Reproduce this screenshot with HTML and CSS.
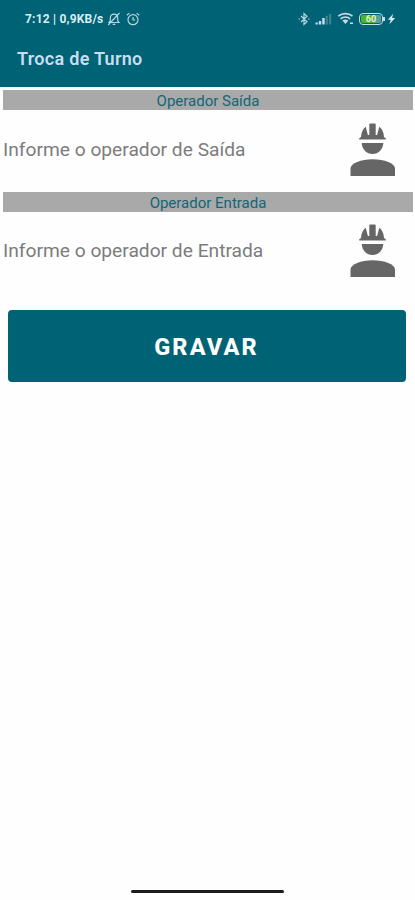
FILE: index.html
```html
<!DOCTYPE html>
<html lang="pt-BR">
<head>
  <meta charset="UTF-8" />
  <meta name="viewport" content="width=device-width, initial-scale=1">
  <title>Troca de Turno</title>
  <link rel="stylesheet" href="styles.css">
</head>
<body>
  <svg class="defs" width="0" height="0">
    <symbol id="operator" viewBox="0 0 46 54">
      <path d="M9.200 16.600v-1.400l1.800-1.200C11.200 9.500 12.900 5.800 15.700 3.700L17.900 12h1.400V1.500Q19.300.5 20.300.5h4.400q1 0 1 1V12h1.400l2.200-8.300c2.800 2.100 4.500 5.800 4.700 10.300l1.800 1.200v1.400z"/>
      <path d="M11.700 20h21.600C33 26.500 28.300 31 22.500 31S12 26.500 11.700 20z"/>
      <path d="M.5 53v-7.500C.5 40.500 11 36.300 22.700 36.300S45 40.500 45 45.500V53z"/>
    </symbol>
  </svg>

  <header>
    <div class="status-bar">
      <div class="status-left">
        <span class="clock">7:12 | 0,9KB/s</span>
        <svg class="bell" width="14" height="14" viewBox="0 0 14 14">
          <path d="M2 10.500h10L10.700 8.800V5.900C10.700 3.600 9.200 2.100 7 2.100S3.300 3.600 3.300 5.900v2.900zM5.700 12.300h2.600M12.500 1 1.200 13"/>
        </svg>
        <svg class="alarm" width="14" height="14" viewBox="0 0 14 14">
          <circle cx="7" cy="7.700" r="5"/>
          <path d="M7 5v3h2.200M.8 3.300 3.400 1.100M13.200 3.300 10.600 1.100"/>
        </svg>
      </div>
      <div class="status-right">
        <svg class="bluetooth" width="12" height="14" viewBox="0 0 12 14">
          <path d="M3 4l6 5.800L6 12.500v-11L9 4.200 3 10M.5 7H2M10 7h1.500"/>
        </svg>
        <svg class="signal" width="17" height="12" viewBox="0 0 17 12">
          <path d="M.5 9.500h2.300v2H.5zM3.800 8h2.400v3.500H3.800zM7.200 5h2.500v6.500H7.200z"/>
          <path class="dim" d="M10.700 2.800h2.200v8.700h-2.200zM14 1h2.200v10.500H14z"/>
        </svg>
        <svg class="wifi" width="18" height="13" viewBox="0 0 18 13">
          <path class="waves" d="M1.300 4.200c4-3.500 10.200-3.500 14.200 0M3.600 6.800c2.800-2.400 6.900-2.400 9.600 0"/>
          <path d="M5.400 8.500c1.800-1.500 4.200-1.500 6 0l-3 3.400zM13 10.500h3v1.600h-3z"/>
        </svg>
        <div class="battery"><span>60</span></div>
        <svg class="bolt" width="9" height="12" viewBox="0 0 9 12">
          <path d="M6.200.8.8 6.700h2.900L2.400 11.200 8.200 5H5.100z"/>
        </svg>
      </div>
    </div>
    <h1>Troca de Turno</h1>
  </header>

  <main>
    <section>
      <h2>Operador Saída</h2>
      <div class="field">
        <span>Informe o operador de Saída</span>
        <svg class="operator" width="46" height="54"><use href="#operator"/></svg>
      </div>
    </section>
    <section>
      <h2>Operador Entrada</h2>
      <div class="field">
        <span>Informe o operador de Entrada</span>
        <svg class="operator" width="46" height="54"><use href="#operator"/></svg>
      </div>
    </section>
    <button class="save">GRAVAR</button>
  </main>

  <footer>
    <div class="home-bar"></div>
  </footer>
</body>
</html>
```

FILE: styles.css
```css
* {
  box-sizing: border-box;
}
body {
  display: flex;
  flex-direction: column;
  height: 100vh;
  margin: 0;
  background: #fefefe;
  font-family: Roboto, sans-serif;
  overflow: hidden;
}
.defs {
  display: block;
}
header {
  height: 87px;
  background: #006275;
  color: #c9def0;
}
.status-bar {
  display: flex;
  justify-content: space-between;
  height: 37px;
  padding: 0 19px 0 25px;
}
.status-left,
.status-right {
  display: flex;
  align-items: center;
}
.clock {
  width: 79px;
  color: #d9edf3;
  font-size: 12px;
  font-weight: 700;
  letter-spacing: 0.2px;
  white-space: nowrap;
}
.bell,
.alarm,
.bluetooth {
  fill: none;
  stroke: #b9d6df;
  stroke-width: 1.2;
}
.bell {
  margin-left: 3px;
}
.alarm {
  margin-left: 5px;
}
.signal {
  margin-left: 5px;
  fill: #c5dde5;
}
.signal .dim {
  fill: #3b8291;
}
.wifi {
  margin-left: 5px;
  fill: #c5dde5;
}
.wifi .waves {
  fill: none;
  stroke: #c5dde5;
  stroke-width: 1.6;
}
.battery {
  position: relative;
  width: 24px;
  height: 12px;
  margin: 0 2px 0 4px;
  padding: 1px;
  border: 1px solid #c5dde5;
  border-radius: 4px;
  background: linear-gradient(90deg, #49b52c 65%, #5f9c94 65%) content-box;
  color: #e4f3cf;
  font-size: 9px;
  font-weight: 700;
  line-height: 8px;
  text-align: center;
}
.battery::after {
  content: "";
  position: absolute;
  top: 3px;
  right: -3px;
  width: 2px;
  height: 4px;
  background: #c5dde5;
}
.bolt {
  margin-left: 2px;
  fill: #d3e8ee;
}
h1 {
  margin: 0;
  padding: 10px 0 0 17px;
  font-size: 18px;
  font-weight: 600;
  letter-spacing: 0.3px;
  line-height: 24px;
}
main {
  flex: 1;
  padding: 3px 2px 0 3px;
}
section {
  height: 102px;
}
h2 {
  height: 20px;
  margin: 0;
  padding-top: 1px;
  background: #a9a9a9;
  color: #126676;
  font-size: 15px;
  font-weight: 400;
  line-height: 20px;
  text-align: center;
}
.field {
  display: flex;
  justify-content: space-between;
  padding: 13px 17px 0 0;
  color: #7c7c7c;
  font-size: 19.2px;
}
section + section .field {
  padding-top: 12px;
}
.field span {
  padding-top: 15px;
  line-height: 24px;
  white-space: nowrap;
}
.operator {
  fill: #666;
}
.save {
  display: block;
  width: 398px;
  height: 72px;
  margin: 16px 0 0 4.5px;
  padding: 2px 0 0;
  border: 0;
  border-radius: 4px;
  background: #006275;
  color: #fff;
  font-family: inherit;
  font-size: 23.5px;
  font-weight: 800;
  letter-spacing: 2.1px;
}
footer {
  height: 10px;
}
.home-bar {
  width: 153px;
  height: 3px;
  margin-left: 131px;
  border-radius: 2px;
  background: #1c1c1c;
}
```
